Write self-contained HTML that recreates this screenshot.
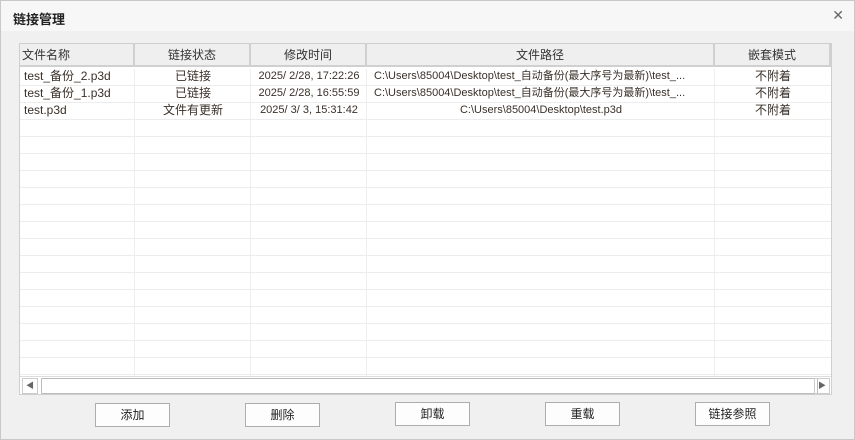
<!DOCTYPE html><html><head><style>
body{margin:0;width:855px;height:440px;overflow:hidden;background:#f0f0f0;font-family:"Liberation Sans","Noto Sans CJK SC",sans-serif;font-size:12px;color:#3a3028;position:relative}
.win{position:absolute;left:0;top:0;width:853px;height:438px;border:1px solid #c8c8c8;background:#f0f0f0}
.title{position:absolute;left:0;top:0;width:853px;height:30px;background:#f7f7f7}
.title b{position:absolute;left:12px;top:8px;font-size:13px;color:#222}
.x{position:absolute;right:10px;top:6px;font-size:14px;color:#666}
.grid{position:absolute;left:18px;top:42px;width:811px;height:350px;border:1px solid #cfcfcf;background:#fff;overflow:hidden}
.hd{position:absolute;top:0;height:23px;line-height:23px;background:#efefef;border-right:2px solid #d0d0d0;border-bottom:2px solid #d0d0d0;box-sizing:border-box;text-align:center;color:#333;font-size:12px}
.vl{position:absolute;top:25px;width:1px;height:308px;background:#eeeeee}
.hl{position:absolute;left:0;width:811px;height:1px;background:#ececec}
.c{position:absolute;height:17px;line-height:17px;white-space:nowrap;overflow:hidden;font-size:12px}
.sb{position:absolute;left:0;top:332px;width:811px;height:18px;background:#fff;border-top:1px solid #ddd}
.sb .t{position:absolute;left:21px;top:1px;width:775px;height:14px;border:1px solid #bbb;border-radius:1px}
.sb .a{position:absolute;top:1px;width:14px;height:14px;border:1px solid #ccc;font-size:8px;color:#666;text-align:center;line-height:14px}
.btn{position:absolute;width:73px;height:22px;border:1px solid #adadad;background:#fdfdfd;text-align:center;line-height:22px;font-size:12px;color:#222}
</style></head><body><div class="win">
<div class="title"><b>链接管理</b><span class="x">✕</span></div>
<div class="grid">
<div class="hd" style="left:0;width:115px;text-align:left;padding-left:2px">文件名称</div>
<div class="hd" style="left:115px;width:116px">链接状态</div>
<div class="hd" style="left:231px;width:116px">修改时间</div>
<div class="hd" style="left:347px;width:348px">文件路径</div>
<div class="hd" style="left:695px;width:116px">嵌套模式</div>
<div class="vl" style="left:114px"></div><div class="vl" style="left:230px"></div><div class="vl" style="left:346px"></div><div class="vl" style="left:694px"></div>
<div class="hl" style="top:41px"></div><div class="hl" style="top:58px"></div><div class="hl" style="top:75px"></div><div class="hl" style="top:92px"></div><div class="hl" style="top:109px"></div><div class="hl" style="top:126px"></div><div class="hl" style="top:143px"></div><div class="hl" style="top:160px"></div><div class="hl" style="top:177px"></div><div class="hl" style="top:194px"></div><div class="hl" style="top:211px"></div><div class="hl" style="top:228px"></div><div class="hl" style="top:245px"></div><div class="hl" style="top:262px"></div><div class="hl" style="top:279px"></div><div class="hl" style="top:296px"></div><div class="hl" style="top:313px"></div><div class="hl" style="top:330px"></div>
<div class="c" style="left:4px;top:24px">test_备份_2.p3d</div>
<div class="c" style="left:115px;width:116px;text-align:center;top:24px">已链接</div>
<div class="c" style="left:231px;width:116px;text-align:center;top:24px;font-size:11px">2025/ 2/28, 17:22:26</div>
<div class="c" style="left:354px;width:340px;top:24px;font-size:11px">C:\Users\85004\Desktop\test_自动备份(最大序号为最新)\test_...</div>
<div class="c" style="left:695px;width:116px;text-align:center;top:24px">不附着</div>
<div class="c" style="left:4px;top:41px">test_备份_1.p3d</div>
<div class="c" style="left:115px;width:116px;text-align:center;top:41px">已链接</div>
<div class="c" style="left:231px;width:116px;text-align:center;top:41px;font-size:11px">2025/ 2/28, 16:55:59</div>
<div class="c" style="left:354px;width:340px;top:41px;font-size:11px">C:\Users\85004\Desktop\test_自动备份(最大序号为最新)\test_...</div>
<div class="c" style="left:695px;width:116px;text-align:center;top:41px">不附着</div>
<div class="c" style="left:4px;top:58px">test.p3d</div>
<div class="c" style="left:115px;width:116px;text-align:center;top:58px">文件有更新</div>
<div class="c" style="left:231px;width:116px;text-align:center;top:58px;font-size:11px">2025/ 3/ 3, 15:31:42</div>
<div class="c" style="left:347px;width:348px;text-align:center;top:58px;font-size:11px">C:\Users\85004\Desktop\test.p3d</div>
<div class="c" style="left:695px;width:116px;text-align:center;top:58px">不附着</div>
<div class="sb"><div class="a" style="left:2px">◀</div><div class="t"></div><div class="a" style="left:794px">▶</div></div>
</div>
<div class="btn" style="left:94px;top:402px">添加</div>
<div class="btn" style="left:244px;top:402px">删除</div>
<div class="btn" style="left:394px;top:401px">卸载</div>
<div class="btn" style="left:544px;top:401px">重载</div>
<div class="btn" style="left:694px;top:401px">链接参照</div>
</div></body></html>
